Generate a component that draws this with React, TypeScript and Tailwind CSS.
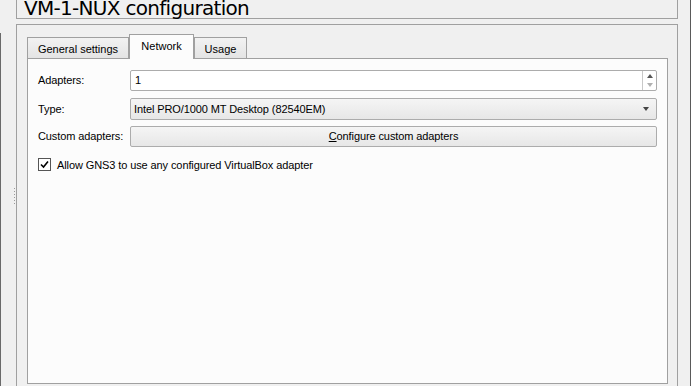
import React from "react";

const ui = { fontFamily: '"Liberation Sans", Arial, sans-serif' };

function Tab({ label, active, width }: { label: string; active?: boolean; width: string }) {
  if (active) {
    return (
      <div
        className={`${width} relative z-10 -mb-px flex h-[25px] justify-center border-x border-t border-[#a0a0a0] bg-[#fcfcfc] pt-[5px] text-[11px] leading-[13px] text-black`}
      >
        {label}
      </div>
    );
  }
  return (
    <div
      className={`${width} flex h-[21px] justify-center border-x border-t border-[#a0a0a0] bg-gradient-to-b from-[#f2f2f2] to-[#e4e4e4] pt-[5px] text-[11px] leading-[13px] text-black`}
    >
      {label}
    </div>
  );
}

function SpinBox({ value }: { value: string }) {
  return (
    <div className="flex h-[21px] rounded-[2px] border border-[#acacac] bg-white">
      <div className="flex flex-1 items-center pl-[4px]">{value}</div>
      <div className="flex w-[14px] flex-col border-l border-[#c8c8c8]">
        <div className="flex flex-1 items-center justify-center pt-[1px]">
          <div className="h-0 w-0 border-x-[3.5px] border-b-[4px] border-x-transparent border-b-[#555]" />
        </div>
        <div className="flex flex-1 items-center justify-center pb-[1px]">
          <div className="h-0 w-0 border-x-[3.5px] border-t-[4px] border-x-transparent border-t-[#b0b0b0]" />
        </div>
      </div>
    </div>
  );
}

function ComboBox({ value }: { value: string }) {
  return (
    <div className="flex h-[22px] items-center rounded-[2px] border border-[#acacac] bg-gradient-to-b from-[#f5f5f5] to-[#e7e7e7] pl-[3px] pr-[7px]">
      <span className="flex-1">{value}</span>
      <div className="h-0 w-0 border-x-[3.5px] border-t-[4px] border-x-transparent border-t-[#444]" />
    </div>
  );
}

export default function App() {
  return (
    <div className="flex h-[386px] w-[691px] overflow-hidden bg-[#f0f0f0] text-[11px] text-black" style={ui}>
      {/* left window edge + splitter */}
      <div className="flex w-px flex-col">
        <div className="mt-[33px] flex-1 bg-[#6a6a6a]" />
      </div>
      <div className="flex w-[15px] flex-col items-end pr-px pt-[188px]">
        <div className="flex flex-col gap-[2px]">
          {[0, 1, 2, 3, 4, 5].map((i) => (
            <div key={i} className="h-px w-px bg-[#9a9a9a]" />
          ))}
        </div>
      </div>

      {/* main column */}
      <div className="flex w-[662px] flex-col">
        <div className="h-[20px] border-x border-b border-[#a0a0a0] pl-[7px]">
          <div
            className="-mt-[2px] text-[20px] leading-[20px] tracking-[-0.7px] text-black"
            style={{ fontFamily: '"DejaVu Sans", Verdana, sans-serif' }}
          >
            VM-1-NUX configuration
          </div>
        </div>

        <div className="mt-[5px] h-[380px] shrink-0 border border-[#a0a0a0] pl-[10px] pr-[9px] pt-[10px]">
          <div className="flex h-[23px] items-end">
            <Tab label="General settings" width="w-[102px]" />
            <Tab label="Network" width="w-[65px]" active />
            <Tab label="Usage" width="w-[53px]" />
          </div>
          <div className="flex h-[326px] flex-col border border-[#a0a0a0] bg-[#fcfcfc] px-[10px] pt-[11px]">
            <div className="grid grid-cols-[92px_1fr] items-center gap-y-[6px] tracking-[-0.1px]">
              <div>Adapters:</div>
              <SpinBox value="1" />
              <div className="mt-[1px]">Type:</div>
              <div className="mt-[1px]">
                <ComboBox value="Intel PRO/1000 MT Desktop (82540EM)" />
              </div>
              <div>Custom adapters:</div>
              <button className="flex h-[21px] items-center justify-center rounded-[2px] border border-[#acacac] bg-gradient-to-b from-[#f5f5f5] to-[#e7e7e7]">
                <span>
                  <span className="underline">C</span>onfigure custom adapters
                </span>
              </button>
            </div>
            <div className="mt-[8px] flex items-center gap-[6px]">
              <div className="flex h-[13px] w-[13px] items-center justify-center border border-[#555] bg-white">
                <svg width="9" height="9" viewBox="0 0 9 9">
                  <path d="M1 4.5 L3.5 7 L8 1.5" fill="none" stroke="#000" strokeWidth="1.6" />
                </svg>
              </div>
              <span className="pt-[2px] tracking-[-0.1px]">Allow GNS3 to use any configured VirtualBox adapter</span>
            </div>
          </div>
        </div>
      </div>

      {/* right gutter */}
      <div className="w-[12px]" />
      <div className="w-px bg-[#5a5a5a]" />
    </div>
  );
}
